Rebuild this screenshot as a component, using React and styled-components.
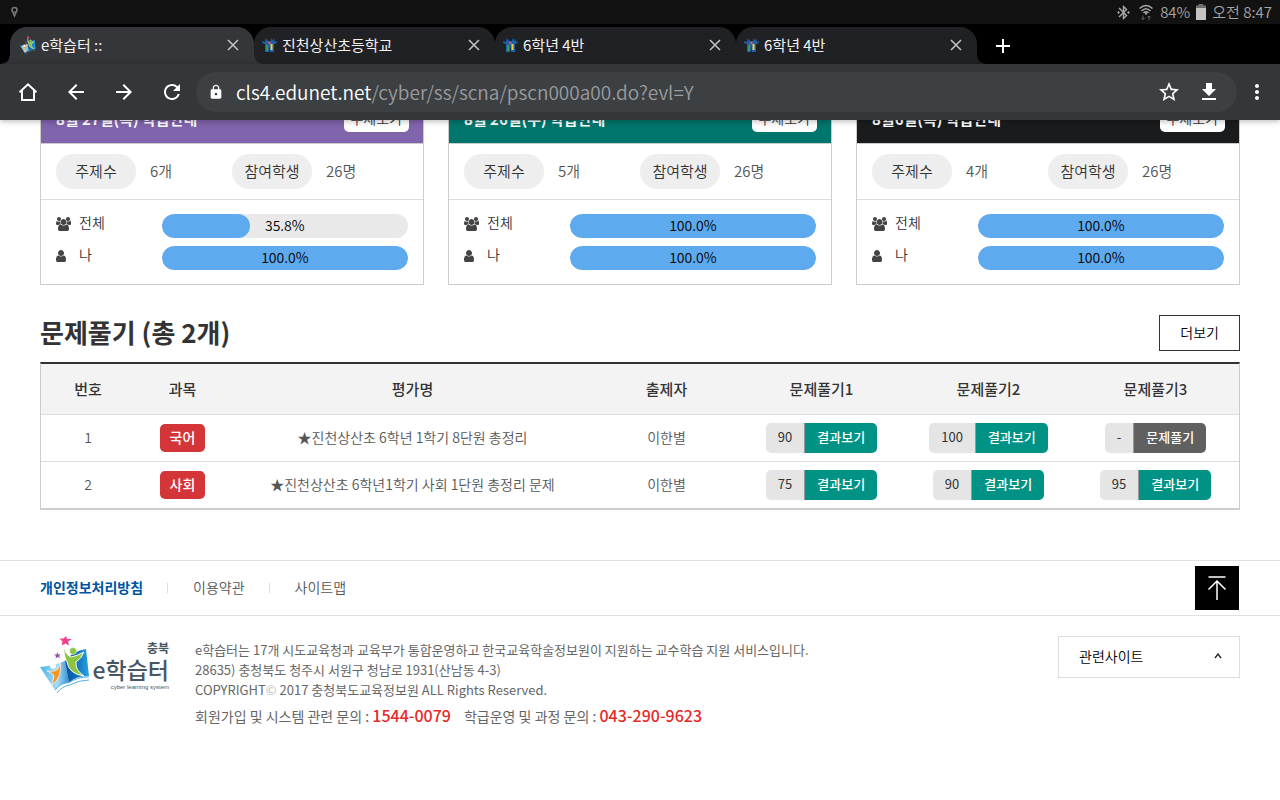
import React from 'react';
import styled, { createGlobalStyle, css } from 'styled-components';
import { MdArrowBack, MdArrowForward, MdRefresh, MdLock, MdStarOutline, MdAdd, MdMoreVert, MdBluetoothConnected } from 'react-icons/md';

const GlobalStyle = createGlobalStyle`
  * {
    box-sizing: border-box;
  }
  body {
    margin: 0;
    background: #fff;
    color: #555;
    font-family: 'Noto Sans CJK KR', 'Noto Sans', sans-serif;
    font-size: 14px;
    font-weight: 350;
    line-height: 20px;
  }
  button {
    margin: 0;
    padding: 0;
    border: 0;
    background: none;
    color: inherit;
    font: inherit;
    cursor: pointer;
  }
  a {
    color: inherit;
    text-decoration: none;
  }
  svg {
    display: block;
    flex: none;
  }
`;

const Screen = styled.div`
  display: flex;
  flex-direction: column;
  height: 100vh;
  overflow: hidden;
`;

/* device status bar */

const StatusBar = styled.div`
  display: flex;
  align-items: center;
  justify-content: space-between;
  flex: none;
  height: 24px;
  padding: 0 8px 0 9px;
  background: #121212;
  color: #a6a6a6;
`;

const StatusRight = styled.div`
  display: flex;
  align-items: center;
  gap: 6px;
  font-size: 15px;
  line-height: 24px;
`;

/* browser tabs */

const TabStrip = styled.div`
  display: flex;
  align-items: flex-end;
  flex: none;
  height: 40px;
  padding-left: 10px;
  background: #000;
`;

const Tab = styled.div`
  position: relative;
  display: flex;
  align-items: center;
  width: 241px;
  height: 37px;
  padding: 0 15px 2px 8px;
  border-radius: 17px 17px 0 0;
  background: #202124;
  color: #f1f1f1;

  &::after {
    content: '';
    position: absolute;
    z-index: 1;
    left: 100%;
    bottom: 0;
    width: 8px;
    height: 8px;
    background: radial-gradient(circle at 100% 0, transparent 7px, #202124 8px);
  }

  ${props =>
    props.$active &&
    css`
      width: 244px;
      padding-left: 10px;
      background: #35363a;

      &::before {
        content: '';
        position: absolute;
        right: 100%;
        bottom: 0;
        width: 8px;
        height: 8px;
        background: radial-gradient(circle at 0 0, transparent 7px, #35363a 8px);
      }
      &::after {
        background: radial-gradient(circle at 100% 0, transparent 7px, #35363a 8px);
      }
    `}
`;

const TabTitle = styled.span`
  flex: 1;
  margin-left: 5px;
  overflow: hidden;
  font-size: 15px;
  font-weight: 400;
  white-space: nowrap;
`;

const NewTab = styled.button`
  display: flex;
  align-items: center;
  height: 37px;
  margin-left: 14px;
  color: #fff;
`;

/* browser toolbar */

const Toolbar = styled.div`
  position: relative;
  z-index: 2;
  display: flex;
  align-items: center;
  flex: none;
  height: 56px;
  padding: 0 11px 0 16px;
  background: #35363a;
  box-shadow: 0 1px 6px rgba(0, 0, 0, 0.3);
  color: #fff;
`;

const ToolNav = styled.div`
  display: flex;
  gap: 24px;
  margin-right: 12px;
`;

const AddressBar = styled.div`
  display: flex;
  align-items: center;
  flex: 1;
  height: 40px;
  margin-right: 8px;
  padding: 0 16px 0 12px;
  border-radius: 20px;
  background: #3c4043;
`;

const Url = styled.div`
  flex: 1;
  margin-left: 12px;
  overflow: hidden;
  color: #9a9c9e;
  font-size: 19px;
  line-height: 28px;
  white-space: nowrap;
`;

const Host = styled.span`
  color: #fff;
`;

const AddressButton = styled.button`
  margin-left: 16px;
`;

/* page */

const Viewport = styled.div`
  flex: 1;
  min-height: 0;
  overflow: hidden;
`;

const Scrolled = styled.div`
  margin-top: -23px;
`;

const Inner = styled.div`
  padding: 0 40px;
`;

const CardGrid = styled.div`
  display: grid;
  grid-template-columns: repeat(3, 1fr);
  gap: 24px;
`;

const Card = styled.section`
  border: 1px solid #ccc;
`;

const CardHead = styled.header`
  display: flex;
  align-items: center;
  justify-content: space-between;
  height: 45px;
  padding: 0 14px 2px 15px;
  background: ${props => props.$color};
`;

const CardTitle = styled.h3`
  margin: 0;
  padding-bottom: 2px;
  color: #fff;
  font-size: 15px;
  font-weight: 700;
`;

const TopicButton = styled.button`
  height: 24px;
  padding: 0 7px 4px 6px;
  border-radius: 5px;
  background: #fff;
  color: #333;
  line-height: 20px;
`;

const CardMeta = styled.dl`
  display: grid;
  grid-template-columns: 1fr 1fr;
  margin: 0;
  padding: 10px 15px;
  border-top: 1px solid #ccc;
  border-bottom: 1px solid #ddd;
  font-size: 15px;
  line-height: 33px;
`;

const MetaItem = styled.div`
  display: flex;
  gap: 14px;

  dt {
    width: 80px;
    height: 35px;
    border-radius: 18px;
    background: #eee;
    color: #333;
    text-align: center;
  }
  dd {
    margin: 0;
  }
`;

const Progress = styled.div`
  display: grid;
  gap: 8px;
  padding: 14px 15px;
`;

const ProgressRow = styled.div`
  display: grid;
  grid-template-columns: 3fr 7fr;
  height: 24px;
  color: #333;
`;

const Who = styled.div`
  display: grid;
  grid-template-columns: 15px 1fr;
  align-items: start;
  column-gap: 8px;
  line-height: 16px;

  svg {
    margin-top: 3px;
  }
`;

const Track = styled.div`
  display: grid;
  height: 24px;
  border-radius: 12px;
  background: #e9e9e9;
  overflow: hidden;
  color: #000;
  line-height: 22px;
  text-align: center;

  > * {
    grid-area: 1 / 1;
  }
`;

const Fill = styled.div`
  height: 24px;
  border-radius: 12px;
  background: #5eaaef;
`;

const SectionHead = styled.div`
  display: flex;
  align-items: center;
  justify-content: space-between;
  margin: 30px 0 11px;
`;

const SectionTitle = styled.h2`
  margin: 0;
  padding-bottom: 2px;
  color: #333;
  font-size: 26px;
  font-weight: 700;
  line-height: 34px;
`;

const MoreLink = styled.a`
  height: 36px;
  padding: 0 20px;
  border: 1px solid #333;
  color: #000;
  line-height: 32px;
`;

const Table = styled.table`
  width: 100%;
  border-collapse: separate;
  border-spacing: 0;
  border: 1px solid #ccc;
  border-top: 2px solid #333;
  border-bottom-width: 2px;
  table-layout: fixed;
  text-align: center;

  th {
    height: 50px;
    padding: 0;
    background: #f3f3f3;
    color: #333;
    font-size: 15px;
    font-weight: 500;
  }
  td {
    height: 47px;
    padding: 0 0 2px;
    border-top: 1px solid #ddd;
  }
`;

/* cell that holds a tag or a button group instead of plain text */
const BoxCell = styled.td`
  && {
    padding: 0;
  }
`;

const Subject = styled.span`
  display: inline-block;
  height: 28px;
  padding: 0 10px;
  border-radius: 5px;
  background: #d43538;
  color: #fff;
  font-weight: 500;
  line-height: 26px;
  vertical-align: middle;
`;

const ScoreGroup = styled.div`
  display: inline-flex;
  height: 30px;
  border-radius: 5px;
  overflow: hidden;
  font-size: 13px;
  line-height: 28px;
  vertical-align: middle;
`;

const Score = styled.span`
  padding: 0 12px;
  border-right: 1px solid #999;
  background: #e5e5e5;
  color: #333;
  font-weight: 400;
`;

const ScoreButton = styled.button`
  padding: 0 12px 2px;
  background: ${props => (props.$pending ? '#606060' : '#009385')};
  color: #fff;
  font-weight: 500;
`;

/* footer */

const FooterNav = styled.nav`
  display: flex;
  align-items: center;
  height: 56px;
  margin-top: 50px;
  padding: 0 41px 0 40px;
  border: solid #e1e1e1;
  border-width: 1px 0;

  a + a::before {
    content: '';
    display: inline-block;
    height: 10px;
    margin: 0 25px 0 24px;
    border-left: 1px solid #ddd;
  }
`;

const FooterLink = styled.a`
  padding-bottom: 2px;
  color: ${props => (props.$strong ? '#0055a2' : '#555')};
  font-weight: ${props => (props.$strong ? 700 : 350)};
`;

const TopButton = styled.button`
  display: flex;
  align-items: center;
  justify-content: center;
  width: 44px;
  height: 44px;
  margin-left: auto;
  background: #000;
`;

const FooterBody = styled.div`
  display: flex;
  align-items: flex-start;
  padding: 20px 40px;
`;

const Logo = styled.a`
  display: flex;
  width: 129px;
  margin-right: 26px;
  color: #475663;
`;

const LogoText = styled.span`
  display: flex;
  flex: 1;
  flex-direction: column;
  align-items: flex-end;
  padding-top: 5px;
  font-weight: 500;
  white-space: nowrap;
`;

const LogoRegion = styled.span`
  font-size: 12px;
  font-weight: 700;
  line-height: 14px;
`;

const LogoName = styled.span`
  font-size: 23px;
  line-height: 28px;
`;

const LogoSub = styled.span`
  font-family: 'Liberation Sans', sans-serif;
  font-size: 6px;
  line-height: 8px;
`;

const Address = styled.address`
  flex: 1;
  padding-top: 4px;
  color: #666;
  font-size: 13px;
  font-style: normal;
  font-weight: 400;

  p {
    margin: 0;
  }
`;

const Mark = styled.span`
  color: #bbb;
`;

const Contacts = styled.p`
  display: flex;
  gap: 13px;
  padding-top: 5px;
  font-size: 14px;
`;

const Phone = styled.a`
  color: #e62929;
  font-size: 16px;
  font-weight: 500;
`;

const SiteButton = styled.button`
  display: flex;
  align-items: center;
  justify-content: space-between;
  width: 182px;
  height: 42px;
  padding: 0 17px 2px 20px;
  border: 1px solid #ddd;
  color: #000;
`;

/* icons */

const PinIcon = () => (
  <svg width="11" height="12" viewBox="0 0 11 12" fill="none" stroke="#777">
    <circle cx="5.500" cy="4" r="2.500" strokeWidth="1.500" />
    <path d="M4 7l1.500 3L7 7" strokeWidth="1.500" />
  </svg>
);

const WifiIcon = () => (
  <svg width="16" height="18" viewBox="0 0 16 18" fill="none" stroke="#a6a6a6" strokeWidth="1.500">
    <path d="M1.500 5.500Q8-.5 14.500 5.500M3.500 8Q8 3.500 12.500 8M5.500 10Q8 7.500 10.500 10" />
    <path d="M8 9.500v2" strokeWidth="2" />
    <path d="M5 12.500v4M3.500 15L5 16.500 6.500 15M11 17v-4M9.500 14.500L11 13l1.500 1.500" stroke="#666" strokeWidth="1" />
  </svg>
);

const BatteryIcon = () => (
  <svg width="10" height="16" viewBox="0 0 10 16">
    <path d="M2.500 0h5v1.500H10V4H0V1.500h2.500z" fill="#6d6d6d" />
    <path d="M0 4h10v12H0z" fill="#c4c4c4" />
  </svg>
);

const CloseIcon = () => (
  <svg width="12" height="12" viewBox="0 0 12 12" stroke="#c4c5c6" strokeWidth="1.500">
    <path d="M1 1l10 10M11 1L1 11" />
  </svg>
);

const HomeIcon = () => (
  <svg width="24" height="24" viewBox="0 0 24 24" fill="none" stroke="currentColor" strokeWidth="2">
    <path d="M3.500 12.300L12 4.300l8.500 8M6 10.500V20h12v-9.500" />
  </svg>
);

const DownloadIcon = () => (
  <svg width="24" height="24" viewBox="0 0 24 24" fill="currentColor">
    <path d="M19 9h-4V3H9v6H5l7 7 7-7zM5 18v2h14v-2H5z" />
  </svg>
);

const UsersIcon = () => (
  <svg width="15" height="14" viewBox="0 0 1920 1792" fill="#444">
    <path d="M593 896q-162 5-265 128h-134q-82 0-138-40.500t-56-118.500q0-353 124-353 6 0 43.500 21t97.500 42.500 119.500 21.500q67 0 133-23-5 37-5 66 0 159 93 293zm1071 637q0 120-73 189.500t-194 69.500h-874q-121 0-194-69.500t-73-189.500q0-53 3.500-103.500t14-109 26.500-108.500 43-97.500 62-81 85.500-53.500 111.500-20q10 0 43 21.500t73 48 107 48 135 21.500 135-21.500 107-48 73-48 43-21.500q61 0 111.500 20t85.500 53.500 62 81 43 97.500 26.500 108.500 14 109 3.500 103.500zm-1024-1277q0 106-75 181t-181 75-181-75-75-181 75-181 181-75 181 75 75 181zm704 384q0 159-112.500 271.500t-271.500 112.500-271.500-112.500-112.500-271.500 112.500-271.500 271.500-112.500 271.500 112.500 112.500 271.500zm576 225q0 78-56 118.500t-138 40.500h-134q-103-123-265-128 93-134 93-293 0-29-5-66 66 23 133 23 59 0 119.500-21.500t97.500-42.500 43.500-21q124 0 124 353zm-128-609q0 106-75 181t-181 75-181-75-75-181 75-181 181-75 181 75 75 181z" />
  </svg>
);

const UserIcon = () => (
  <svg width="10" height="14" viewBox="0 0 1280 1792" fill="#444">
    <path d="M1280 1399q0 109-62.500 187t-150.500 78h-854q-88 0-150.500-78t-62.500-187q0-85 8.500-160.500t31.500-152 58.500-131 94-89 134.500-34.500q131 128 313 128t313-128q76 0 134.500 34.500t94 89 58.500 131 31.500 152 8.500 160.500zm-256-887q0 159-112.500 271.500t-271.500 112.500-271.500-112.500-112.500-271.500 112.500-271.500 271.500-112.500 271.500 112.500 112.500 271.500z" />
  </svg>
);

const TopIcon = () => (
  <svg width="20" height="26" viewBox="0 0 20 26" fill="none" stroke="#fff" strokeWidth="1.500">
    <path d="M1.500 2h17M10 6v19M1.500 14.500L10 6l8.500 8.500" />
  </svg>
);

const CaretIcon = () => (
  <svg width="8" height="6" viewBox="0 0 8 6" fill="none" stroke="#222" strokeWidth="1.300">
    <path d="M1 5l3-4 3 4" />
  </svg>
);

const BookMark = ({ width, height }) => (
  <svg width={width} height={height} viewBox="0 0 50 57">
    <defs>
      <linearGradient id="pageLeft" x1="0" x2="1">
        <stop offset="0" stopColor="#45b5e8" />
        <stop offset="0.600" stopColor="#a9dcf5" />
        <stop offset="1" stopColor="#2c8fd3" />
      </linearGradient>
      <linearGradient id="pageRight" x1="0" x2="1">
        <stop offset="0" stopColor="#0c4c9f" />
        <stop offset="0.500" stopColor="#1272c0" />
        <stop offset="1" stopColor="#27a5df" />
      </linearGradient>
    </defs>
    <path d="M0 31q12-1 25-6l4 22q-10 1-14 7z" fill="url(#pageLeft)" />
    <path d="M25 25q8-10 21-12l3 27q-14 0-20 7z" fill="url(#pageRight)" />
    <path d="M15 54q6-8 15-8 8-5 19-5M17 57q5-7 13-8 9-5 19-5" fill="none" stroke="#56aedd" />
    <path d="M24 9q1 10 7 12 6-1 13-5-3 7-8 10-1 8 8 14-15-2-17-14-4-7-3-17z" fill="#8cc63e" stroke="#fff" />
    <circle cx="33" cy="15" r="3.500" fill="#8cc63e" stroke="#fff" strokeWidth="0.500" />
    <circle cx="13" cy="30" r="3" fill="#fff" />
    <path d="M20 24q3 17-8 25l2-9q-1-3-7-5 8 1 11-2 2-4 2-9z" fill="#f7941e" stroke="#fff" strokeWidth="0.700" />
    <path d="M26 0l1 3 5 0-4 2.500 1 4-3.500-2-4 2 1-4-3-3h4z" fill="#f0418b" />
    <path d="M17.500 16l.5 2.500 2.500-.5-1.500 2 1 2-2.500-1-2 1.500.5-2.500-2-1.500h2.500z" fill="#9350a8" />
  </svg>
);

const SchoolMark = () => (
  <svg width="15" height="15" viewBox="0 0 15 15">
    <path d="M0 4q0 3 3 3v8h4l.5-6 .5 6h4V7q3 0 3-3l-2 1-1-4-1 3-1.500-3-.5 3h-3l-.5-3L5 4 3.500 1 3 5z" fill="#1c62a8" />
    <path d="M4 8h2v6H4z" fill="#3c9a58" />
    <path d="M8.500 7h2v6h-2z" fill="#f6cf3d" />
    <circle cx="7.500" cy="6" r="1.300" fill="#dc5a5d" />
  </svg>
);

const tabs = [
  { title: 'e학습터 ::', active: true },
  { title: '진천상산초등학교' },
  { title: '6학년 4반' },
  { title: '6학년 4반' },
];

const lessons = [
  { title: '8월 27일(목) 학습안내', color: '#8064ac', topics: '6개', students: '26명', all: 35.8, me: 100 },
  { title: '8월 26일(수) 학습안내', color: '#00766d', topics: '5개', students: '26명', all: 100, me: 100 },
  { title: '8월6일(목) 학습안내', color: '#1a1b1d', topics: '4개', students: '26명', all: 100, me: 100 },
];

const quizzes = [
  { no: 1, subject: '국어', name: '★진천상산초 6학년 1학기 8단원 총정리', author: '이한별', scores: [90, 100, null] },
  { no: 2, subject: '사회', name: '★진천상산초 6학년1학기 사회 1단원 총정리 문제', author: '이한별', scores: [75, 90, 95] },
];

function ProgressBar({ value }) {
  return (
    <Track>
      <Fill style={{ width: `${value}%` }} />
      <span>{value.toFixed(1)}%</span>
    </Track>
  );
}

function LessonCard({ title, color, topics, students, all, me }) {
  return (
    <Card>
      <CardHead $color={color}>
        <CardTitle>{title}</CardTitle>
        <TopicButton>주제보기</TopicButton>
      </CardHead>
      <CardMeta>
        <MetaItem>
          <dt>주제수</dt>
          <dd>{topics}</dd>
        </MetaItem>
        <MetaItem>
          <dt>참여학생</dt>
          <dd>{students}</dd>
        </MetaItem>
      </CardMeta>
      <Progress>
        <ProgressRow>
          <Who><UsersIcon />전체</Who>
          <ProgressBar value={all} />
        </ProgressRow>
        <ProgressRow>
          <Who><UserIcon />나</Who>
          <ProgressBar value={me} />
        </ProgressRow>
      </Progress>
    </Card>
  );
}

function QuizRow({ no, subject, name, author, scores }) {
  return (
    <tr>
      <td>{no}</td>
      <BoxCell><Subject>{subject}</Subject></BoxCell>
      <td>{name}</td>
      <td>{author}</td>
      {scores.map((score, i) => (
        <BoxCell key={i}>
          <ScoreGroup>
            <Score>{score === null ? '-' : score}</Score>
            <ScoreButton $pending={score === null}>
              {score === null ? '문제풀기' : '결과보기'}
            </ScoreButton>
          </ScoreGroup>
        </BoxCell>
      ))}
    </tr>
  );
}

function BrowserChrome() {
  return (
    <>
      <StatusBar>
        <PinIcon />
        <StatusRight>
          <MdBluetoothConnected size={17} />
          <WifiIcon />
          <span>84%</span>
          <BatteryIcon />
          <span>오전 8:47</span>
        </StatusRight>
      </StatusBar>
      <TabStrip>
        {tabs.map((tab, i) => (
          <Tab key={i} $active={tab.active}>
            {tab.active ? <BookMark width={16} height={18} /> : <SchoolMark />}
            <TabTitle>{tab.title}</TabTitle>
            <button aria-label="탭 닫기"><CloseIcon /></button>
          </Tab>
        ))}
        <NewTab aria-label="새 탭"><MdAdd size={24} /></NewTab>
      </TabStrip>
      <Toolbar>
        <ToolNav>
          <button aria-label="홈"><HomeIcon /></button>
          <button aria-label="뒤로"><MdArrowBack size={24} /></button>
          <button aria-label="앞으로"><MdArrowForward size={24} /></button>
          <button aria-label="새로고침"><MdRefresh size={24} /></button>
        </ToolNav>
        <AddressBar>
          <MdLock size={16} />
          <Url role="textbox" aria-label="주소">
            <Host>cls4.edunet.net</Host>/cyber/ss/scna/pscn000a00.do?evl=Y
          </Url>
          <AddressButton aria-label="북마크"><MdStarOutline size={24} /></AddressButton>
          <AddressButton aria-label="다운로드"><DownloadIcon /></AddressButton>
        </AddressBar>
        <button aria-label="메뉴"><MdMoreVert size={24} /></button>
      </Toolbar>
    </>
  );
}

function Footer() {
  return (
    <footer>
      <FooterNav>
        <FooterLink href="#privacy" $strong>개인정보처리방침</FooterLink>
        <FooterLink href="#terms">이용약관</FooterLink>
        <FooterLink href="#sitemap">사이트맵</FooterLink>
        <TopButton aria-label="맨 위로"><TopIcon /></TopButton>
      </FooterNav>
      <FooterBody>
        <Logo href="#home">
          <BookMark width={50} height={57} />
          <LogoText>
            <LogoRegion>충북</LogoRegion>
            <LogoName>e학습터</LogoName>
            <LogoSub>cyber learning system</LogoSub>
          </LogoText>
        </Logo>
        <Address>
          <p>e학습터는 17개 시도교육청과 교육부가 통합운영하고 한국교육학술정보원이 지원하는 교수학습 지원 서비스입니다.</p>
          <p>28635) 충청북도 청주시 서원구 청남로 1931(산남동 4-3)</p>
          <p>COPYRIGHT<Mark>©</Mark> 2017 충청북도교육정보원 ALL Rights Reserved.</p>
          <Contacts>
            <span>회원가입 및 시스템 관련 문의 : <Phone href="tel:1544-0079">1544-0079</Phone></span>
            <span>학급운영 및 과정 문의 : <Phone href="tel:043-290-9623">043-290-9623</Phone></span>
          </Contacts>
        </Address>
        <SiteButton aria-expanded="false">관련사이트<CaretIcon /></SiteButton>
      </FooterBody>
    </footer>
  );
}

function App() {
  return (
    <Screen>
      <GlobalStyle />
      <BrowserChrome />
      <Viewport>
        <Scrolled>
          <Inner>
            <CardGrid>
              {lessons.map(lesson => (
                <LessonCard key={lesson.title} {...lesson} />
              ))}
            </CardGrid>
            <SectionHead>
              <SectionTitle>문제풀기 (총 2개)</SectionTitle>
              <MoreLink href="#more">더보기</MoreLink>
            </SectionHead>
            <Table>
              <colgroup>
                <col width="94" />
                <col width="95" />
                <col />
                <col width="143" />
                <col width="167" />
                <col width="167" />
                <col width="167" />
              </colgroup>
              <thead>
                <tr>
                  <th>번호</th>
                  <th>과목</th>
                  <th>평가명</th>
                  <th>출제자</th>
                  <th>문제풀기1</th>
                  <th>문제풀기2</th>
                  <th>문제풀기3</th>
                </tr>
              </thead>
              <tbody>
                {quizzes.map(quiz => (
                  <QuizRow key={quiz.no} {...quiz} />
                ))}
              </tbody>
            </Table>
          </Inner>
          <Footer />
        </Scrolled>
      </Viewport>
    </Screen>
  );
}

export default App;
